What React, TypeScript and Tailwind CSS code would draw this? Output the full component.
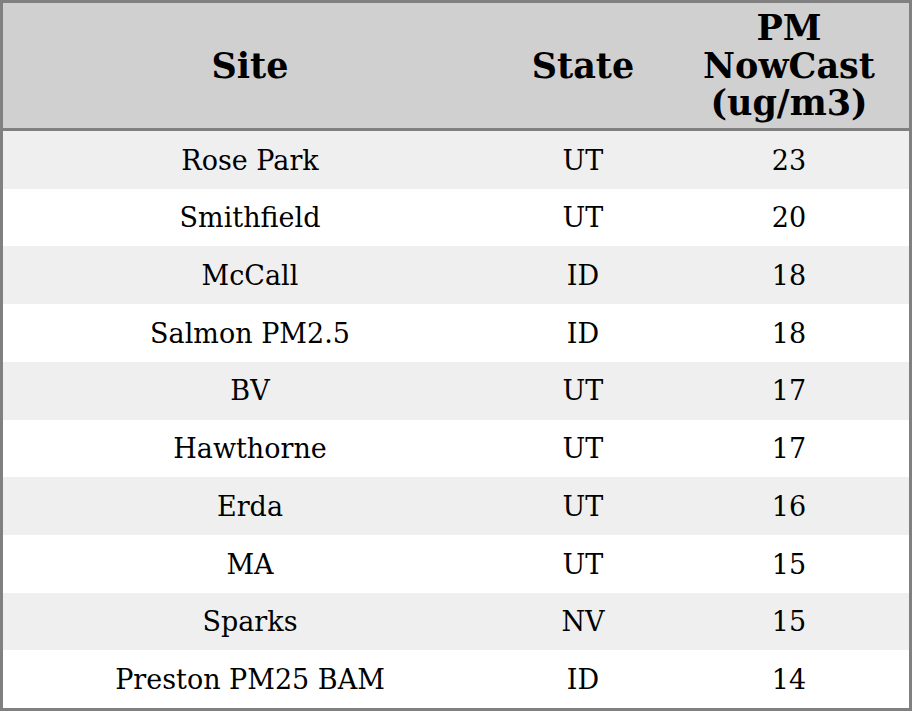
const rows = [
  { site: 'Rose Park', state: 'UT', pm: 23 },
  { site: 'Smithfield', state: 'UT', pm: 20 },
  { site: 'McCall', state: 'ID', pm: 18 },
  { site: 'Salmon PM2.5', state: 'ID', pm: 18 },
  { site: 'BV', state: 'UT', pm: 17 },
  { site: 'Hawthorne', state: 'UT', pm: 17 },
  { site: 'Erda', state: 'UT', pm: 16 },
  { site: 'MA', state: 'UT', pm: 15 },
  { site: 'Sparks', state: 'NV', pm: 15 },
  { site: 'Preston PM25 BAM', state: 'ID', pm: 14 },
]

export default function App() {
  return (
    <div
      className="flex h-[711px] w-[912px] flex-col border-[3px] border-[#808080] bg-white text-black"
      style={{ fontFamily: '"DejaVu Serif", "Liberation Serif", serif' }}
    >
      <div className="grid h-[128px] shrink-0 grid-cols-[494px_172px_1fr] items-center border-b-[3px] border-[#808080] bg-[#d0d0d0] text-center text-[35px] font-bold leading-[37.5px]">
        <div>Site</div>
        <div>State</div>
        <div>
          PM
          <br />
          NowCast
          <br />
          (ug/m3)
        </div>
      </div>
      <div className="flex flex-1 flex-col">
        {rows.map((r, i) => (
          <div
            key={r.site}
            className={`grid flex-1 grid-cols-[494px_172px_1fr] items-center pt-[2px] text-center text-[27px] ${
              i % 2 === 0 ? 'bg-[#efefef]' : 'bg-white'
            }`}
          >
            <div>{r.site}</div>
            <div>{r.state}</div>
            <div>{r.pm}</div>
          </div>
        ))}
      </div>
    </div>
  )
}
